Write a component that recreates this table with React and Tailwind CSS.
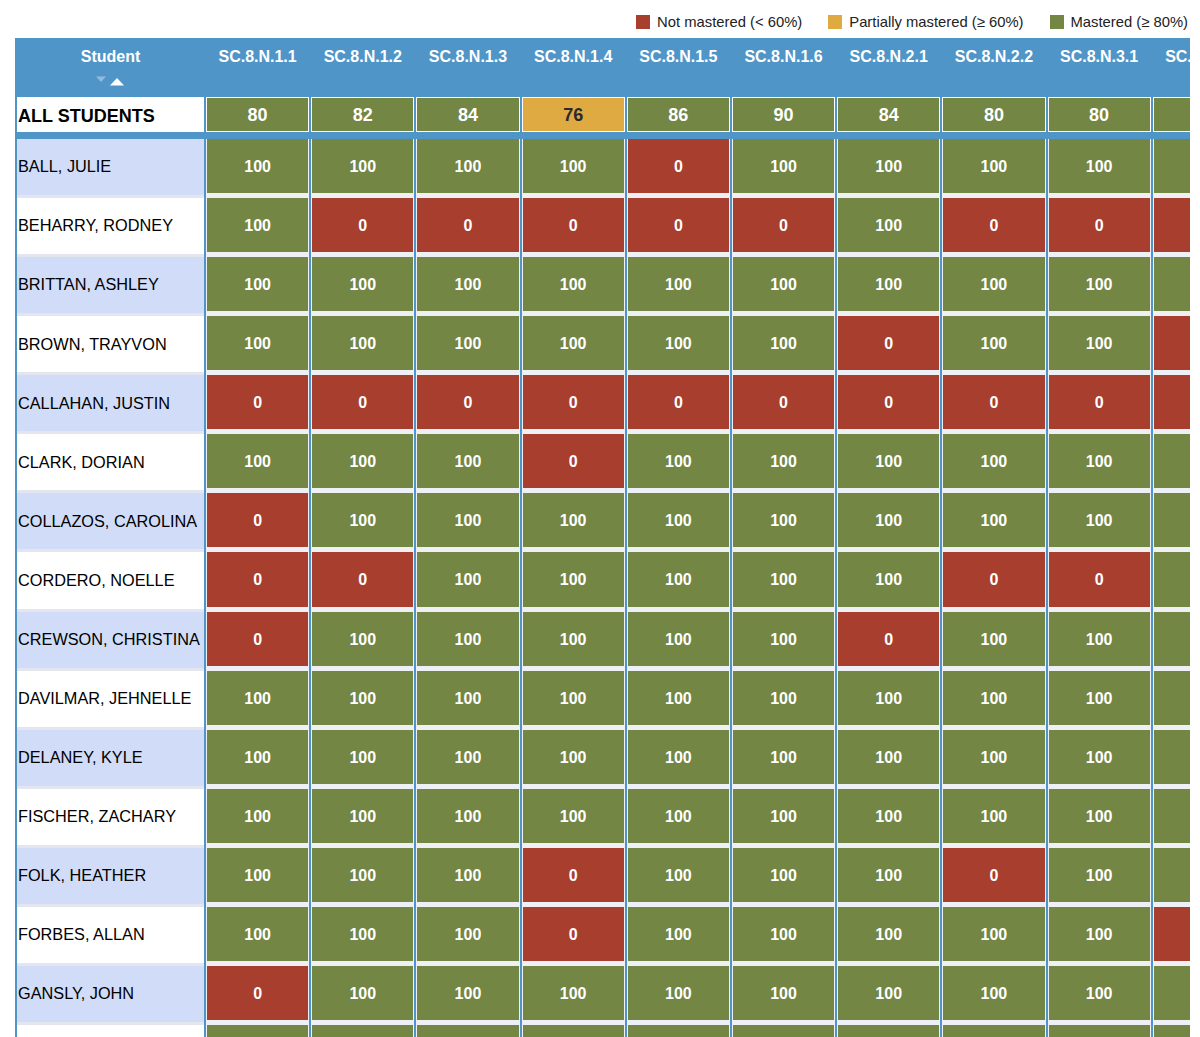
import React from "react";

const GREEN = "bg-[#738644]";
const RED = "bg-[#a83e2e]";
const YELLOW = "bg-[#dfaa42]";

const columns = [
  "SC.8.N.1.1",
  "SC.8.N.1.2",
  "SC.8.N.1.3",
  "SC.8.N.1.4",
  "SC.8.N.1.5",
  "SC.8.N.1.6",
  "SC.8.N.2.1",
  "SC.8.N.2.2",
  "SC.8.N.3.1",
  "SC.8.N.3.2",
];

const averages = [80, 82, 84, 76, 86, 90, 84, 80, 80, 80];

const A = 100;
const students = [
  { name: "BALL, JULIE", scores: [A, A, A, A, 0, A, A, A, A, A] },
  { name: "BEHARRY, RODNEY", scores: [A, 0, 0, 0, 0, 0, A, 0, 0, 0] },
  { name: "BRITTAN, ASHLEY", scores: [A, A, A, A, A, A, A, A, A, A] },
  { name: "BROWN, TRAYVON", scores: [A, A, A, A, A, A, 0, A, A, 0] },
  { name: "CALLAHAN, JUSTIN", scores: [0, 0, 0, 0, 0, 0, 0, 0, 0, 0] },
  { name: "CLARK, DORIAN", scores: [A, A, A, 0, A, A, A, A, A, A] },
  { name: "COLLAZOS, CAROLINA", scores: [0, A, A, A, A, A, A, A, A, A] },
  { name: "CORDERO, NOELLE", scores: [0, 0, A, A, A, A, A, 0, 0, A] },
  { name: "CREWSON, CHRISTINA", scores: [0, A, A, A, A, A, 0, A, A, A] },
  { name: "DAVILMAR, JEHNELLE", scores: [A, A, A, A, A, A, A, A, A, A] },
  { name: "DELANEY, KYLE", scores: [A, A, A, A, A, A, A, A, A, A] },
  { name: "FISCHER, ZACHARY", scores: [A, A, A, A, A, A, A, A, A, A] },
  { name: "FOLK, HEATHER", scores: [A, A, A, 0, A, A, A, 0, A, A] },
  { name: "FORBES, ALLAN", scores: [A, A, A, 0, A, A, A, A, A, 0] },
  { name: "GANSLY, JOHN", scores: [0, A, A, A, A, A, A, A, A, A] },
  { name: "GARCIA, LUIS", scores: [A, A, A, A, A, A, A, A, A, A] },
];

const colorFor = (v) => (v >= 80 ? GREEN : v >= 60 ? YELLOW : RED);

const gridCols = "grid grid-cols-[187px_repeat(10,103.2px)] gap-x-[2px]";

const Legend = ({ color, label }) => (
  <div className="flex items-center gap-[7px]">
    <span className={`w-[14px] h-[14px] ${color}`} />
    <span>{label}</span>
  </div>
);

// sort indicator under the Student heading
const SortArrows = () => (
  <svg width="30" height="12" viewBox="0 0 30 12" className="mt-[10px]">
    <polygon points="0,0.5 10,0.5 5,6" fill="#93bbdf" />
    <polygon points="14,9.5 28,9.5 21,2" fill="#ffffff" />
  </svg>
);

export default function App() {
  return (
    <div className="w-[1200px] h-[1037px] overflow-hidden bg-white font-['Liberation_Sans',Arial,sans-serif]">
      {/* legend */}
      <div className="h-[38px] flex items-center justify-end gap-[26px] pr-[12px] pt-[6px] text-[14.8px] text-[#222]">
        <Legend color={RED} label="Not mastered (< 60%)" />
        <Legend color={YELLOW} label="Partially mastered (≥ 60%)" />
        <Legend color={GREEN} label="Mastered (≥ 80%)" />
      </div>

      {/* table */}
      <div className="ml-[15px] w-[1175px] overflow-hidden bg-[#5095c7] pl-[2px]">
        {/* header */}
        <div className={`${gridCols} h-[59px] text-white font-bold text-[16px]`}>
          <div className="flex flex-col items-center pt-[10px] leading-[18px]">
            <span>Student</span>
            <SortArrows />
          </div>
          {columns.map((c) => (
            <div key={c} className="text-center pt-[10px] leading-[18px] whitespace-nowrap">
              {c}
            </div>
          ))}
        </div>

        {/* all students */}
        <div className={`${gridCols} h-[35px]`}>
          <div className="bg-white flex items-center pl-px pt-[3px] text-[18px] font-bold text-black">
            ALL STUDENTS
          </div>
          {averages.map((v, i) => (
            <div key={i} className="border border-white flex">
              <div
                className={`flex-1 flex items-center justify-center pt-[2px] text-[18px] font-bold ${colorFor(v)} ${
                  v >= 60 && v < 80 ? "text-[#2b2b2b]" : "text-white"
                }`}
              >
                {v}
              </div>
            </div>
          ))}
        </div>

        <div className="h-[7px]" />

        {/* students */}
        {students.map((s, r) => (
          <div key={s.name} className={`${gridCols} h-[59.07px]`}>
            <div
              className={`flex items-center pl-px pb-[1px] text-[16.3px] text-black whitespace-nowrap border-b-[3px] border-[#e3e6ee] ${
                r % 2 === 0 ? "bg-[#d0dcf8]" : "bg-white"
              }`}
            >
              {s.name}
            </div>
            {s.scores.map((v, i) => (
              <div key={i} className="flex flex-col bg-[#eef0f6] px-px pb-[5px]">
                <div
                  className={`flex-1 flex items-center justify-center pt-[2px] text-[16px] font-bold text-white ${
                    v >= 80 ? GREEN : RED
                  }`}
                >
                  {v}
                </div>
              </div>
            ))}
          </div>
        ))}
      </div>
    </div>
  );
}
